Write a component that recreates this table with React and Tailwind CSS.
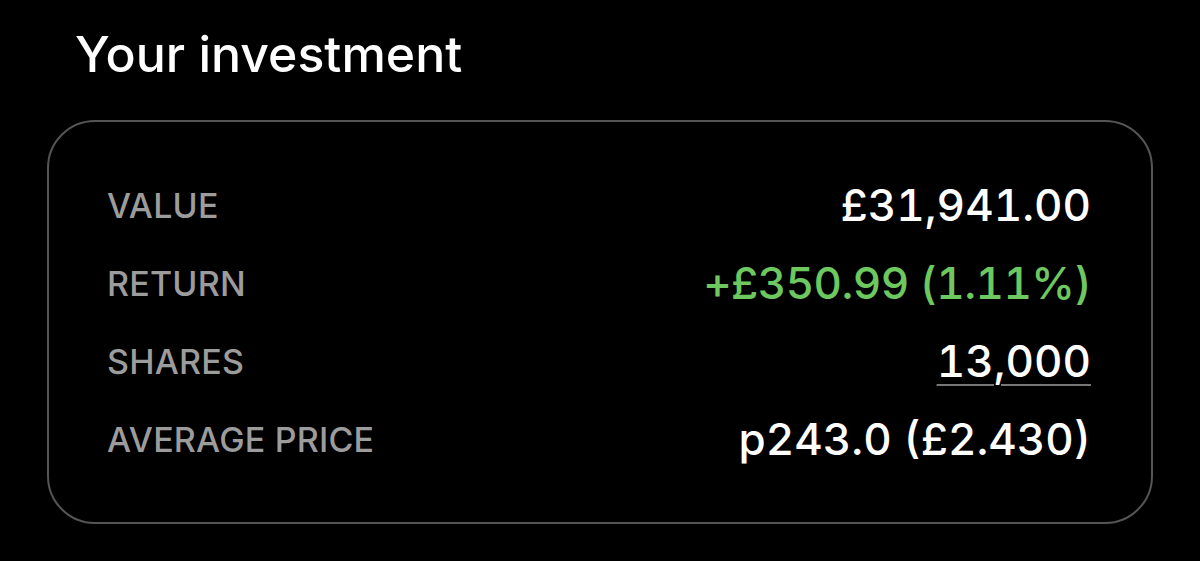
const rows = [
  { label: "VALUE", value: "£31,941.00" },
  { label: "RETURN", value: "+£350.99 (1.11%)", green: true },
  { label: "SHARES", value: "13,000", underline: true },
  { label: "AVERAGE PRICE", value: "p243.0 (£2.430)" },
];

export default function App() {
  return (
    <div className="w-[1200px] h-[561px] bg-black font-['Inter',sans-serif] px-[47px] pt-[24px]">
      <h2 className="pl-[28px] text-[50px] font-medium leading-[60px] text-white">Your investment</h2>
      <div className="mt-[36px] h-[404px] rounded-[48px] border-2 border-[#555] pl-[58px] pr-[60px] pt-[44px]">
        {rows.map((row) => (
          <div key={row.label} className="flex h-[78px] items-center justify-between">
            <span className="text-[34px] font-medium tracking-[0.2px] text-[#9c9c9c]">{row.label}</span>
            <span
              className={
                "text-[44px] font-medium tabular-nums " +
                (row.green ? "text-[#6cc85f] tracking-[-0.6px]" : "text-white") +
                (row.underline ? " underline decoration-[#777] decoration-2 underline-offset-[7px]" : "")
              }
            >
              {row.value}
            </span>
          </div>
        ))}
      </div>
    </div>
  );
}
